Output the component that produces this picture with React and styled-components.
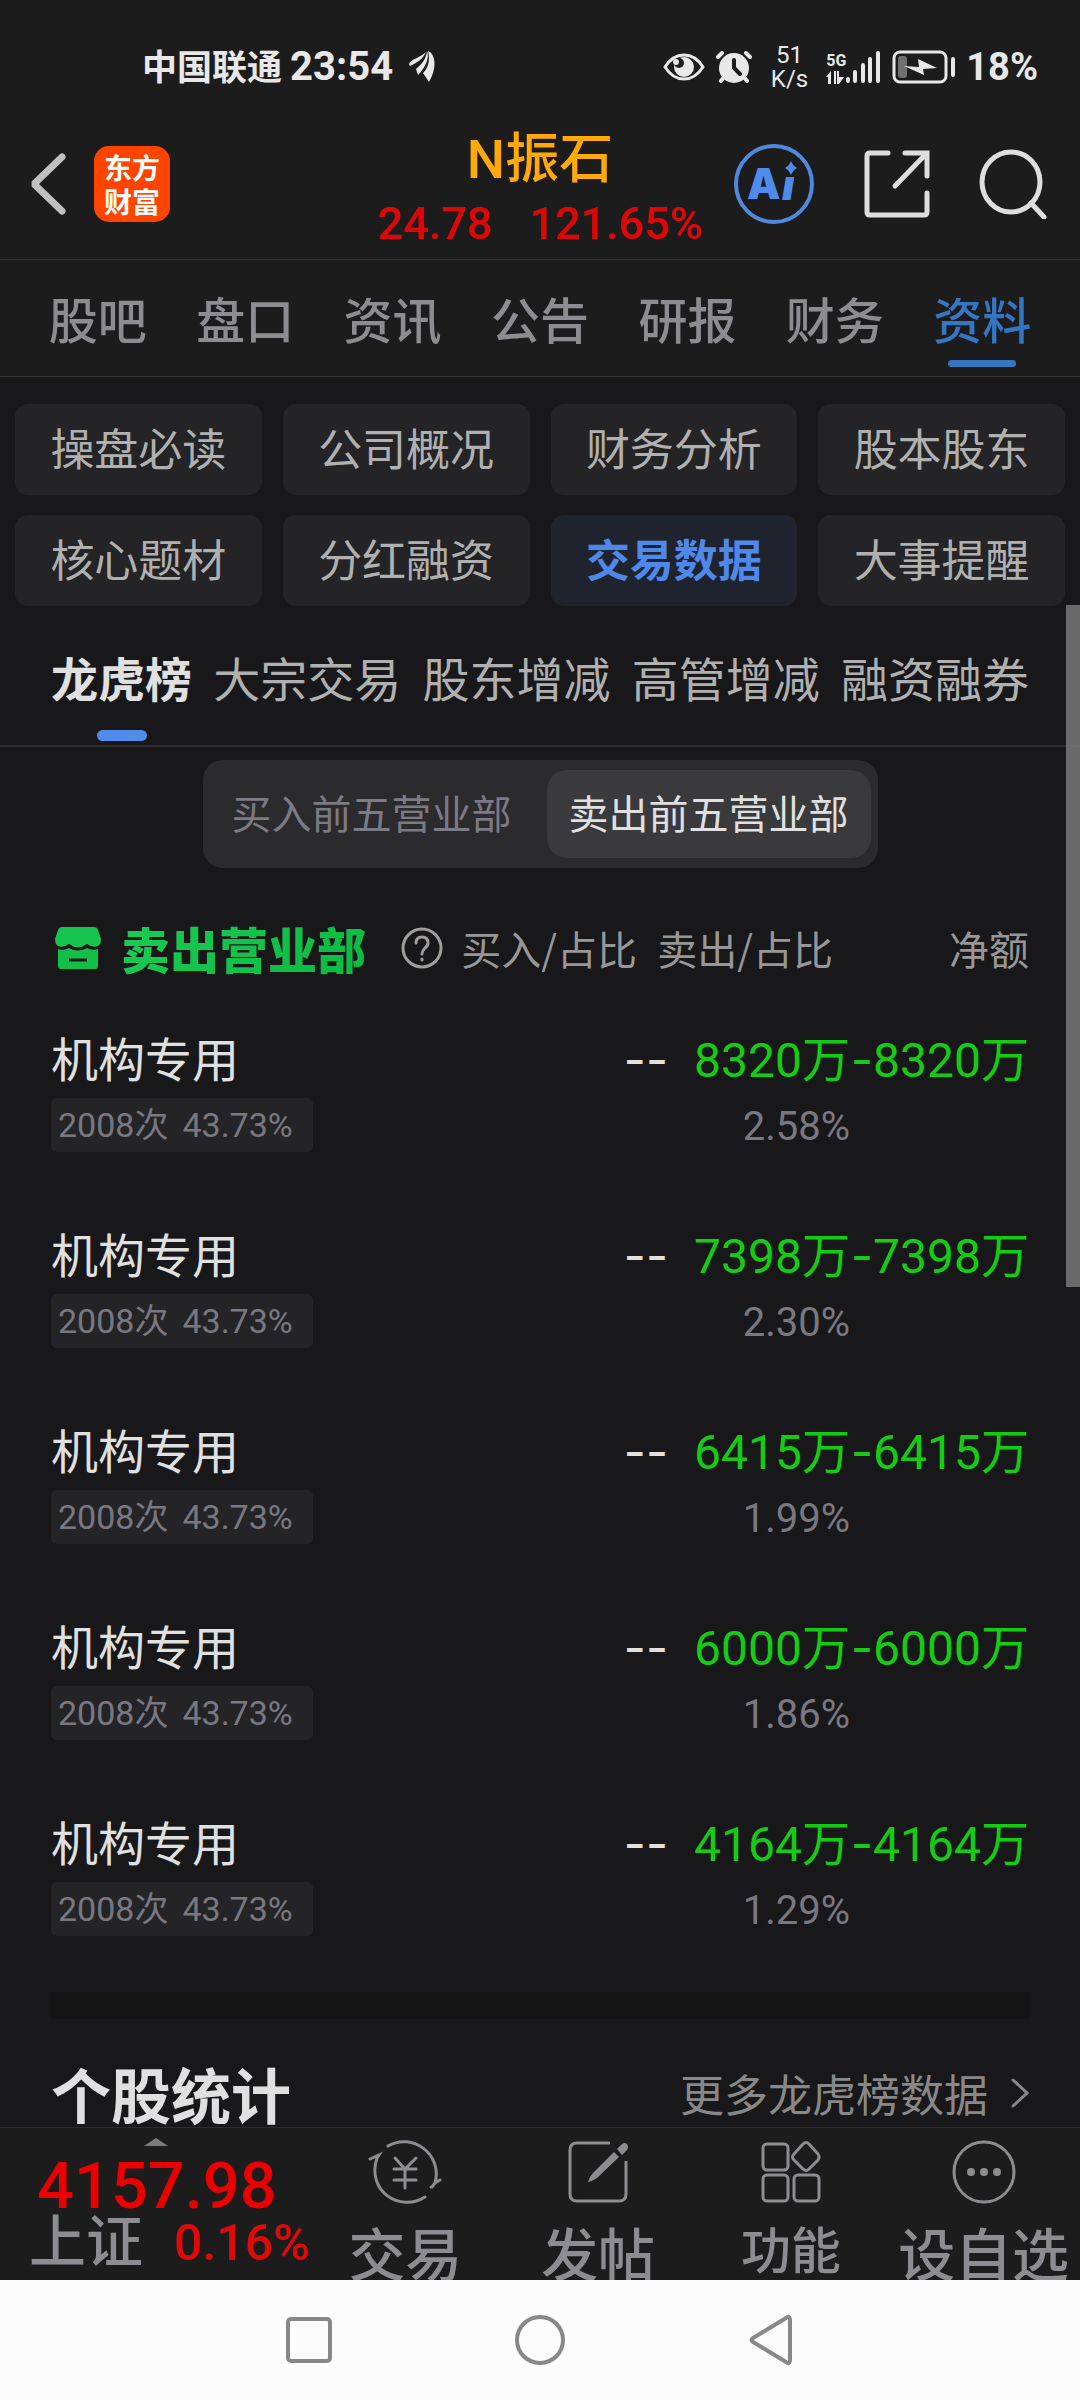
import React from "react";
import styled, { createGlobalStyle } from "styled-components";

const cjk = `"Noto Sans CJK SC", sans-serif`;
const latin = `Roboto, "Noto Sans CJK SC", sans-serif`;

const mainTabs = ["股吧", "盘口", "资讯", "公告", "研报", "财务", "资料"];

const sections = [
  "操盘必读",
  "公司概况",
  "财务分析",
  "股本股东",
  "核心题材",
  "分红融资",
  "交易数据",
  "大事提醒",
];

const subTabs = ["龙虎榜", "大宗交易", "股东增减", "高管增减", "融资融券"];

const seats = [
  { sell: "8320万", ratio: "2.58%" },
  { sell: "7398万", ratio: "2.30%" },
  { sell: "6415万", ratio: "1.99%" },
  { sell: "6000万", ratio: "1.86%" },
  { sell: "4164万", ratio: "1.29%" },
];

const StatusBar = () => (
  <STATUS>
    <div className="group">
      <span className="carrier">中国联通</span>
      <span className="time">23:54</span>
      <svg className="leaf" width="26" height="32" viewBox="0 0 26 32" fill="#e8e8e8">
        <path d="M0 13C2 8 11 7 17 1 14 8 8 12 1 15z" />
        <path d="M7 18C13 13 17 8 18 0c3 7-2 17-9 24z" />
        <path d="M14 22C20 16 21 8 19 0c8 3 9 18 1 31l-4-6z" />
      </svg>
    </div>
    <div className="group">
      <svg className="eye" width="42" height="28" viewBox="0 0 42 28">
        <path
          d="M2 14C12-2 30-2 40 14 30 30 12 30 2 14z"
          fill="none"
          stroke="#e8e8e8"
          strokeWidth="3"
        />
        <circle cx="21" cy="14" r="10" fill="#e8e8e8" />
        <circle cx="16" cy="10" r="5" fill="#1c1c1c" />
        <circle cx="13" cy="9" r="3" fill="#e8e8e8" />
      </svg>
      <svg className="alarm" width="36" height="34" viewBox="0 0 36 34">
        <g stroke="#e8e8e8" strokeWidth="4" strokeLinecap="round" fill="none">
          <path d="M2 7l4-4M34 7l-4-4M5 31l3-4M31 31l-3-4" />
        </g>
        <circle cx="18" cy="18" r="15" fill="#e8e8e8" />
        <path
          d="M18 10v8l6 6"
          stroke="#1c1c1c"
          strokeWidth="4"
          strokeLinecap="round"
          fill="none"
        />
      </svg>
      <span className="speed">
        51
        <br />
        K/s
      </span>
      <div className="network">
        <span>5G</span>
        <svg width="18" height="13" viewBox="0 0 18 13" fill="#e8e8e8">
          <path d="M0 6l5-6v13H2V6zM8 0h2v13H8zM11 0h2v6h5l-5 7h-2z" />
        </svg>
      </div>
      <svg className="signal" width="34" height="34" viewBox="0 0 34 34">
        <g stroke="#e8e8e8" strokeWidth="4" strokeLinecap="round">
          <path d="M2 29v2M9 22v9M17 15v16M24 9v22M32 3v28" />
        </g>
      </svg>
      <svg className="battery" width="64" height="34" viewBox="0 0 64 34">
        <rect
          x="2"
          y="2"
          width="52"
          height="30"
          rx="6"
          fill="none"
          stroke="#e8e8e8"
          strokeWidth="3"
        />
        <rect x="6" y="6" width="9" height="22" rx="3" fill="#707070" />
        <path d="M12 16l15 1-1-8 19 9-14 1 1 6z" fill="#e8e8e8" />
        <path d="M61 9v16" stroke="#e8e8e8" strokeWidth="4" strokeLinecap="round" />
      </svg>
      <span className="percent">18%</span>
    </div>
  </STATUS>
);

const Header = () => (
  <HEADER>
    <div className="side left">
      <button aria-label="返回">
        <svg width="36" height="62" viewBox="0 0 36 62">
          <path
            d="M32 4L4 31l28 27"
            fill="none"
            stroke="#c0c0c0"
            strokeWidth="7"
            strokeLinecap="round"
            strokeLinejoin="bevel"
          />
        </svg>
      </button>
      <div className="logo">
        东方
        <br />
        财富
      </div>
    </div>
    <div className="title">
      <h1>N振石</h1>
      <p>
        <span>24.78</span>
        <span>121.65%</span>
      </p>
    </div>
    <div className="side right">
      <button aria-label="AI">
        <svg width="82" height="82" viewBox="0 0 82 82">
          <circle cx="41" cy="41" r="38" fill="none" stroke="#5088dd" strokeWidth="4" />
          <g fill="#4f8bec" fontFamily="Inter, sans-serif" fontWeight="900">
            <text x="14" y="56" fontSize="42">
              A
            </text>
            <text x="49" y="57" fontSize="42" fontStyle="italic">
              ı
            </text>
          </g>
          <path d="M58 18q2 5 6 7-4 2-6 7-2-5-6-7 4-2 6-7z" fill="#4f8bec" />
        </svg>
      </button>
      <button aria-label="分享">
        <svg width="66" height="68" viewBox="0 0 66 68">
          <path
            d="M24 3H6q-3 0-3 3v56q0 3 3 3h54q3 0 3-3V43M41 3h22v23M62 4L31 36"
            fill="none"
            stroke="#dedede"
            strokeWidth="5"
            strokeLinecap="round"
          />
        </svg>
      </button>
      <button aria-label="搜索">
        <svg width="68" height="70" viewBox="0 0 68 70">
          <g fill="none" stroke="#dedede" strokeWidth="5" strokeLinecap="round">
            <ellipse cx="32" cy="33" rx="29" ry="30" />
            <path d="M52 54l13 14" />
          </g>
        </svg>
      </button>
    </div>
  </HEADER>
);

const SeatTable = () => (
  <TABLE>
    <colgroup>
      <col />
      <col className="buy" />
      <col className="sell" />
      <col className="net" />
    </colgroup>
    <thead>
      <tr>
        <th>
          <div className="caption">
            <svg width="46" height="42" viewBox="0 0 46 42">
              <path
                d="M7 0h32q3 0 4 3l3 9q0 8-7 8-4 0-7-3-4 4-9 4t-9-4q-3 3-7 3-7 0-7-8l3-9q1-3 4-3z"
                fill="#17c44f"
              />
              <path
                d="M3 22q6 2 11-1 9 5 18 0 5 3 11 1v17q0 3-3 3H6q-3 0-3-3z"
                fill="#13bf49"
              />
              <path d="M14 33h18" stroke="#18181a" strokeWidth="3" />
              <path
                d="M2 20q6 3 12-2 9 7 18 0 6 5 12 2"
                fill="none"
                stroke="#18181a"
                strokeWidth="2"
              />
            </svg>
            <strong>卖出营业部</strong>
            <svg width="42" height="42" viewBox="0 0 42 42">
              <g fill="none" stroke="#a09d9a" strokeWidth="3" strokeLinecap="round">
                <circle cx="21" cy="21" r="19" />
                <path d="M15 16q0-6 6-6t6 6q0 3-3 5-3 3-3 6M21 32v1" />
              </g>
            </svg>
          </div>
        </th>
        <th className="buy">买入/占比</th>
        <th>
          <div className="sell">卖出/占比</div>
        </th>
        <th>净额</th>
      </tr>
    </thead>
    <tbody>
      {seats.map((seat) => (
        <tr key={seat.sell}>
          <td>
            <div className="name">机构专用</div>
            <div className="tag">
              <span>2008次</span>
              <span>43.73%</span>
            </div>
          </td>
          <td>
            <DASH>--</DASH>
          </td>
          <td className="down">
            {seat.sell}
            <small>{seat.ratio}</small>
          </td>
          <td className="down">
            <DASH>-</DASH>
            {seat.sell}
          </td>
        </tr>
      ))}
    </tbody>
  </TABLE>
);

const BottomBar = () => (
  <BOTTOM>
    <button className="index">
      <svg width="24" height="8" viewBox="0 0 24 8">
        <path d="M0 8L12 0l12 8z" fill="#7c7b80" />
      </svg>
      <span className="value">4157.98</span>
      <span className="change">
        <span>上证</span>
        <em>0.16%</em>
      </span>
    </button>
    <ACTION>
      <svg width="74" height="66" viewBox="0 0 74 66">
        <g fill="none" stroke="#8d8c91" strokeWidth="3" strokeLinecap="round">
          <path d="M20 7C44-7 75 15 67 44M67 44l5-3M67 44l-3 4h-1" />
          <path d="M57 58C32 74-2 52 9 19M9 19l2-3-9 4" />
          <path d="M27 19l10 11 11-11M26 30h22M26 41h22M37 30v19" />
        </g>
      </svg>
      <span>交易</span>
    </ACTION>
    <ACTION>
      <svg width="62" height="66" viewBox="0 0 62 66">
        <path
          d="M43 4H10q-7 0-7 7v44q0 7 7 7h42q7 0 7-7V22"
          fill="none"
          stroke="#8d8c91"
          strokeWidth="3"
        />
        <path
          d="M21 43q1-5 5-9l21-21 5 5-22 21q-4 3-9 4zM50 10l5-5q3-2 5 0 2 3 0 6l-5 5z"
          fill="#8d8c91"
        />
      </svg>
      <span>发帖</span>
    </ACTION>
    <ACTION $small>
      <svg width="60" height="66" viewBox="0 0 60 66">
        <g fill="none" stroke="#8d8c91" strokeWidth="3">
          <rect x="2" y="5" width="25" height="26" rx="4" />
          <rect x="2" y="36" width="25" height="26" rx="4" />
          <rect x="33" y="36" width="25" height="26" rx="4" />
          <path d="M42 5q3-3 6 0l9 10q2 3 0 6l-9 9q-3 3-6 0l-9-9q-3-3 0-6z" />
        </g>
      </svg>
      <span>功能</span>
    </ACTION>
    <ACTION>
      <svg width="64" height="66" viewBox="0 0 64 66">
        <circle cx="32" cy="33" r="30" fill="none" stroke="#8d8c91" strokeWidth="3" />
        <g fill="#8d8c91">
          <circle cx="19" cy="33" r="4" />
          <circle cx="32" cy="33" r="4" />
          <circle cx="45" cy="33" r="4" />
        </g>
      </svg>
      <span>设自选</span>
    </ACTION>
  </BOTTOM>
);

const SystemNav = () => (
  <SYSTEM>
    <button aria-label="最近任务">
      <svg width="46" height="46" viewBox="0 0 46 46">
        <rect x="2" y="2" width="42" height="42" rx="3" />
      </svg>
    </button>
    <button aria-label="主页">
      <svg width="50" height="50" viewBox="0 0 50 50">
        <circle cx="25" cy="25" r="23" />
      </svg>
    </button>
    <button aria-label="上一级">
      <svg width="44" height="52" viewBox="0 0 44 52">
        <path d="M37 4q4-3 4 2v40q0 5-4 2L4 28q-3-2 0-4z" />
      </svg>
    </button>
  </SYSTEM>
);

export default function App() {
  return (
    <PAGE>
      <GlobalStyle />
      <StatusBar />
      <Header />
      <TABS>
        {mainTabs.map((tab) => (
          <TAB key={tab} href="#" $active={tab === "资料"}>
            {tab}
          </TAB>
        ))}
      </TABS>
      <MAIN>
        <CHIPS>
          {sections.map((item) => (
            <CHIP key={item} $active={item === "交易数据"}>
              {item}
            </CHIP>
          ))}
        </CHIPS>
        <SUBTABS>
          {subTabs.map((tab) => (
            <SUBTAB key={tab} $active={tab === "龙虎榜"}>
              {tab}
            </SUBTAB>
          ))}
        </SUBTABS>
        <SEGMENT>
          <OPTION>买入前五营业部</OPTION>
          <OPTION $active>卖出前五营业部</OPTION>
        </SEGMENT>
        <CONTENT>
          <SeatTable />
          <hr />
          <div className="stats">
            <h2>个股统计</h2>
            <a href="#">
              更多龙虎榜数据
              <svg width="18" height="30" viewBox="0 0 18 30">
                <path
                  d="M2 2l14 13L2 28"
                  fill="none"
                  stroke="#888888"
                  strokeWidth="3"
                  strokeLinecap="round"
                />
              </svg>
            </a>
          </div>
        </CONTENT>
        <THUMB />
      </MAIN>
      <BottomBar />
      <SystemNav />
    </PAGE>
  );
}

const GlobalStyle = createGlobalStyle`
  * {
    box-sizing: border-box;
    margin: 0;
    padding: 0;
  }
  body {
    background: #18181a;
    font-family: ${cjk};
  }
  button {
    border: none;
    background: none;
    font-family: inherit;
    cursor: pointer;
  }
  a {
    text-decoration: none;
  }
  svg {
    display: block;
    flex-shrink: 0;
  }
`;

const PAGE = styled.div`
  display: flex;
  flex-direction: column;
  min-height: 100vh;
  white-space: nowrap;
`;

const STATUS = styled.div`
  display: flex;
  justify-content: space-between;
  align-items: center;
  height: 124px;
  padding: 10px 42px 0 142px;
  background: #1c1c1c;
  color: #e8e8e8;
  .group {
    display: flex;
    align-items: center;
  }
  .carrier {
    padding-bottom: 4px;
    font-size: 35px;
    font-weight: 700;
    line-height: 40px;
  }
  .time {
    margin-left: 8px;
    font-family: ${latin};
    font-size: 40px;
    font-weight: 700;
    line-height: 40px;
  }
  .leaf {
    margin-left: 16px;
  }
  .alarm {
    margin-left: 11px;
  }
  .speed {
    margin-left: 19px;
    font-family: ${latin};
    font-size: 24px;
    font-weight: 400;
    line-height: 24px;
    text-align: center;
  }
  .network {
    margin-left: 18px;
    font-family: ${latin};
    font-size: 16px;
    font-weight: 700;
    line-height: 20px;
  }
  .battery {
    margin-left: 12px;
  }
  .percent {
    margin-left: 10px;
    font-family: ${latin};
    font-size: 38px;
    font-weight: 700;
    line-height: 40px;
  }
`;

const HEADER = styled.header`
  display: grid;
  grid-template-columns: 1fr auto 1fr;
  align-items: start;
  padding-bottom: 7px;
  border-bottom: 1px solid #333333;
  background: #1c1c1c;
  .side {
    display: flex;
    align-items: center;
    height: 120px;
  }
  .left {
    gap: 28px;
    padding-left: 30px;
  }
  .right {
    justify-content: flex-end;
    gap: 49px;
    padding-right: 33px;
  }
  .logo {
    width: 76px;
    padding: 4px 0;
    border-radius: 15px;
    background: #ff4400;
    color: #ffffff;
    font-size: 28px;
    font-weight: 700;
    line-height: 34px;
    text-align: center;
  }
  .title {
    text-align: center;
  }
  h1 {
    color: #ffa90a;
    font-family: ${latin};
    font-size: 54px;
    font-weight: 500;
    line-height: 72px;
  }
  p {
    display: flex;
    justify-content: center;
    gap: 37px;
    color: #dc0808;
    font-family: ${latin};
    font-size: 45px;
    font-weight: 500;
    line-height: 56px;
  }
`;

const TABS = styled.nav`
  display: grid;
  grid-template-columns: repeat(7, 1fr);
  padding: 0 24px;
  border-bottom: 1px solid #333333;
  background: #1c1c1c;
`;

const TAB = styled.a`
  position: relative;
  color: ${(props) => (props.$active ? "#3576c2" : "#8d8c91")};
  font-size: 49px;
  font-weight: 500;
  line-height: 116px;
  text-align: center;
  &::after {
    content: "";
    display: ${(props) => (props.$active ? "block" : "none")};
    position: absolute;
    bottom: 9px;
    left: calc(50% - 34px);
    width: 68px;
    height: 7px;
    border-radius: 4px;
    background: #3576c2;
  }
`;

const MAIN = styled.main`
  position: relative;
  flex: 1;
`;

const CHIPS = styled.div`
  display: grid;
  grid-template-columns: repeat(4, 1fr);
  gap: 20px 21px;
  padding: 27px 15px 0;
`;

const CHIP = styled.button`
  padding-bottom: 5px;
  border-radius: 13px;
  background: ${(props) => (props.$active ? "#1e232e" : "#242426")};
  color: ${(props) => (props.$active ? "#5088ea" : "#b0b0b0")};
  font-size: 44px;
  font-weight: ${(props) => (props.$active ? 700 : 400)};
  line-height: 86px;
`;

const SUBTABS = styled.div`
  display: flex;
  justify-content: space-between;
  padding: 0 51px;
  border-bottom: 2px solid #2c2c2c;
`;

const SUBTAB = styled.button`
  position: relative;
  padding: 31px 0 28px;
  color: ${(props) => (props.$active ? "#e0e0e0" : "#b0b0b0")};
  font-size: 47px;
  font-weight: ${(props) => (props.$active ? 700 : 400)};
  line-height: 80px;
  &::after {
    content: "";
    display: ${(props) => (props.$active ? "block" : "none")};
    position: absolute;
    bottom: 4px;
    left: calc(50% - 25px);
    width: 50px;
    height: 11px;
    border-radius: 6px;
    background: #508cea;
  }
`;

const SEGMENT = styled.div`
  display: flex;
  gap: 13px;
  width: max-content;
  margin: 13px auto 0;
  padding: 10px 7px;
  border-radius: 20px;
  background: #2b2b2d;
`;

const OPTION = styled.button`
  padding: 0 22px 4px;
  border-radius: 20px;
  background: ${(props) => (props.$active ? "#3a3a3c" : "transparent")};
  color: ${(props) => (props.$active ? "#e0e0e0" : "#7b7a85")};
  font-size: 40px;
  line-height: 84px;
`;

const CONTENT = styled.section`
  padding: 0 51px;
  hr {
    height: 27px;
    border: none;
    background: #141414;
  }
  .stats {
    display: flex;
    justify-content: space-between;
    align-items: center;
    padding: 41px 0 2px;
  }
  h2 {
    color: #e0e0e0;
    font-size: 60px;
    font-weight: 700;
    line-height: 65px;
  }
  a {
    display: flex;
    align-items: center;
    gap: 23px;
    color: #888888;
    font-size: 44px;
    line-height: 60px;
  }
`;

const TABLE = styled.table`
  width: 100%;
  border-collapse: collapse;
  table-layout: fixed;
  col.buy {
    width: 223px;
  }
  col.sell {
    width: 182px;
  }
  col.net {
    width: 179px;
  }
  th {
    padding: 40px 0 39px;
    color: #979797;
    font-size: 40px;
    font-weight: 400;
    line-height: 80px;
    text-align: right;
  }
  th.buy {
    padding-right: 31px;
  }
  th .sell {
    margin: 0 17px 0 -11px;
  }
  .caption {
    display: flex;
    align-items: center;
    padding-left: 4px;
  }
  .caption strong {
    margin: 0 35px 0 20px;
    background: linear-gradient(135deg, #1acc55, #0cb840);
    background-clip: text;
    color: transparent;
    font-size: 49px;
    font-weight: 900;
  }
  td {
    padding-bottom: 69px;
    color: #e0e0e0;
    font-family: ${latin};
    font-size: 48px;
    line-height: 60px;
    text-align: right;
    vertical-align: baseline;
  }
  td:first-child {
    text-align: left;
  }
  tr:last-child td {
    padding-bottom: 54px;
  }
  td.down {
    color: #14cc14;
  }
  .name {
    font-family: ${cjk};
    font-size: 47px;
  }
  .tag {
    display: flex;
    gap: 14px;
    width: 262px;
    margin-top: 11px;
    padding-left: 7px;
    border-radius: 6px;
    background: #242426;
    color: #797880;
    font-size: 34px;
    line-height: 54px;
  }
  small {
    display: block;
    margin-top: 9px;
    color: #797880;
    font-size: 40px;
    line-height: 54px;
  }
`;

const DASH = styled.span`
  font-family: Inter, sans-serif;
`;

const THUMB = styled.div`
  position: absolute;
  top: 13%;
  right: 0;
  width: 14px;
  height: 39%;
  background: rgba(128, 128, 128, 0.8);
`;

const BOTTOM = styled.footer`
  display: flex;
  overflow: hidden;
  border-top: 1px solid #2c2c2c;
  background: #1c1c1c;
  .index {
    display: flex;
    flex-direction: column;
    align-items: flex-start;
    width: 309px;
    padding: 10px 0 0 29px;
    font-family: ${latin};
    font-weight: 500;
  }
  .index svg {
    margin-left: 115px;
  }
  .value {
    margin: 8px 0 0 8px;
    color: #ea0000;
    font-size: 65px;
    line-height: 64px;
  }
  .change {
    display: flex;
    align-items: center;
    gap: 31px;
    color: #8d8c91;
    font-size: 57px;
    line-height: 50px;
  }
  em {
    color: #dd0a0a;
    font-size: 50px;
    font-style: normal;
  }
`;

const ACTION = styled.button`
  display: flex;
  flex: 1;
  flex-direction: column;
  align-items: center;
  gap: ${(props) => (props.$small ? 14 : 18)}px;
  padding-top: 11px;
  color: #8d8c91;
  font-size: ${(props) => (props.$small ? 50 : 57)}px;
  font-weight: 500;
  line-height: 57px;
`;

const SYSTEM = styled.nav`
  display: flex;
  justify-content: center;
  background: #fcfcfc;
  button {
    display: flex;
    justify-content: center;
    align-items: center;
    flex: 0 0 21.4%;
    height: 120px;
  }
  svg {
    fill: none;
    stroke: #888888;
    stroke-width: 4;
  }
`;
